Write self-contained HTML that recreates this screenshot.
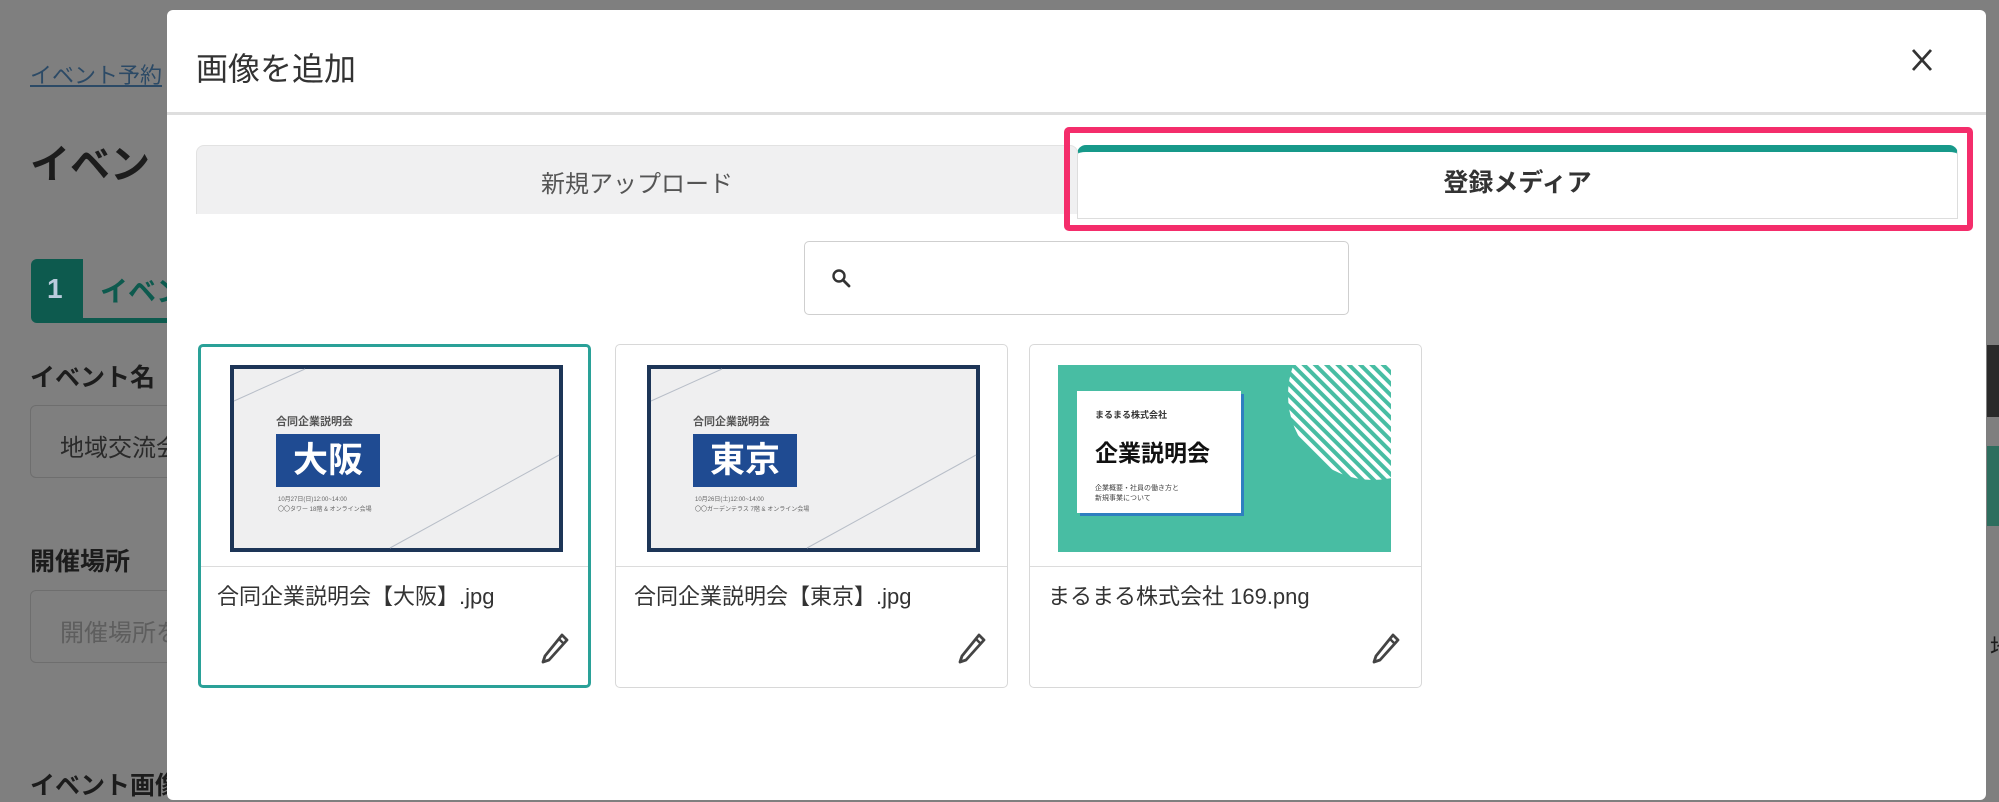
<!DOCTYPE html>
<html><head><meta charset="utf-8"><style>
*{margin:0;padding:0;box-sizing:border-box}
body{width:1999px;height:782px;overflow:hidden;background:#7f7f7f;position:relative;font-family:"Liberation Sans","Noto Sans CJK JP",sans-serif}
.a{position:absolute;white-space:nowrap}
.card{position:absolute;top:344px;width:393px;height:344px;background:#fff;border:1px solid #d8d8d8;border-radius:5px}
.card.sel{border:3px solid #2aa198}
.thumb{position:absolute;left:31px;top:20px;width:333px;height:187px;overflow:hidden}
.div{position:absolute;left:0;right:0;top:221px;height:1px;background:#dcdcdc}
.name{position:absolute;left:18px;top:234px;font-size:22px;color:#333}
.pen{position:absolute;right:20px;top:287px}
</style></head><body>
<div class="a" style="left:30px;top:58px;font-size:22px;color:#2c4a66;text-decoration:underline">イベント予約</div>
<div class="a" style="left:30px;top:132px;font-size:40px;font-weight:bold;color:#1c1c1c">イベン</div>
<div class="a" style="left:31px;top:259px;width:52px;height:64px;background:#0d5a4e;border-radius:6px 0 0 6px;color:#bcd;font-size:28px;font-weight:bold;padding:14px 0 0 16px">1</div>
<div class="a" style="left:83px;top:318px;width:90px;height:5px;background:#0d5a4e"></div>
<div class="a" style="left:100px;top:270px;font-size:28px;font-weight:bold;color:#0d5a4e">イベン</div>
<div class="a" style="left:30px;top:358px;font-size:25px;font-weight:bold;color:#1c1c1c">イベント名</div>
<div class="a" style="left:30px;top:405px;width:200px;height:73px;border:1px solid #6e6e6e;border-radius:6px"></div>
<div class="a" style="left:60px;top:428px;font-size:24px;color:#2a2a2a">地域交流会</div>
<div class="a" style="left:30px;top:542px;font-size:25px;font-weight:bold;color:#1c1c1c">開催場所</div>
<div class="a" style="left:30px;top:590px;width:200px;height:73px;border:1px solid #6e6e6e;border-radius:6px"></div>
<div class="a" style="left:60px;top:613px;font-size:24px;color:#5e5e5e">開催場所を</div>
<div class="a" style="left:30px;top:766px;font-size:25px;font-weight:bold;color:#1c1c1c">イベント画像</div>
<div class="a" style="left:1987px;top:345px;width:12px;height:72px;background:#2a2a2a"></div>
<div class="a" style="left:1987px;top:446px;width:12px;height:80px;background:#2e6e5e"></div>
<div class="a" style="left:1990px;top:630px;font-size:22px;color:#1c1c1c">地</div>
<div class="a" style="left:167px;top:10px;width:1819px;height:790px;background:#fff;border-radius:6px">
  <div class="a" style="left:29px;top:34px;font-size:32px;color:#333">画像を追加</div>
  <svg class="a" style="left:1744px;top:38px" width="22" height="24" viewBox="0 0 22 24"><path d="M2 2L20 22M20 2L2 22" stroke="#333" stroke-width="2.8"/></svg>
  <div class="a" style="left:0;right:0;top:102px;height:3px;background:#dedede"></div>
  <div class="a" style="left:29px;top:135px;width:882px;height:69px;background:#f0f0f1;border:1px solid #e2e2e2;border-bottom:none;border-radius:8px 8px 0 0"></div>
  <div class="a" style="left:29px;top:154px;width:882px;text-align:center;font-size:24px;color:#555">新規アップロード</div>
  <div class="a" style="left:897px;top:117px;width:909px;height:104px;border:6px solid #f42d6b;border-radius:5px"></div>
  <div class="a" style="left:910px;top:135px;width:881px;height:74px;background:#fff;border:1px solid #ddd;border-top:7px solid #17998a;border-radius:9px 9px 0 0"></div>
  <div class="a" style="left:910px;top:153px;width:881px;text-align:center;font-size:25px;font-weight:bold;color:#333">登録メディア</div>
  <div class="a" style="left:637px;top:231px;width:545px;height:74px;border:1px solid #cfcfcf;border-radius:5px"></div>
  <svg class="a" style="left:664px;top:258px" width="22" height="22" viewBox="0 0 22 22"><circle cx="8" cy="8" r="5.5" fill="none" stroke="#333" stroke-width="2.4"/><path d="M12 12L18 18" stroke="#333" stroke-width="2.8" stroke-linecap="round"/></svg>
</div>
<div class="card sel" style="left:198px">
  <div class="thumb" style="left:29px;top:18px">
    <svg width="333" height="187" viewBox="0 0 333 187"><rect width="333" height="187" fill="#1d3557"/><rect x="4" y="4" width="325" height="179" fill="#efeff0"/><path d="M4 36L75 4M160 183L329 90" stroke="#b8bec8" stroke-width="1"/></svg>
    <div class="a" style="left:46px;top:48px;font-size:11px;font-weight:bold;color:#555">合同企業説明会</div>
    <div class="a" style="left:46px;top:69px;width:104px;height:53px;background:#1f4b92;color:#fff;font-size:35px;font-weight:bold;text-align:center;line-height:53px">大阪</div>
    <div class="a" style="left:48px;top:130px;font-size:6px;color:#666;line-height:10px">10月27日(日)12:00~14:00<br>〇〇タワー 18階 &amp; オンライン会場</div>
  </div>
  <div class="div" style="top:219px"></div>
  <div class="name" style="left:16px;top:232px">合同企業説明会【大阪】.jpg</div>
  <svg class="pen" style="right:18px;top:285px" width="30" height="32" viewBox="0 0 30 32"><path d="M22 3L27 8L9 28L3 30L5 24Z" fill="none" stroke="#444" stroke-width="2.8" stroke-linejoin="round"/><path d="M19 7L24 12" stroke="#444" stroke-width="2.4"/></svg>
</div>
<div class="card" style="left:615px">
  <div class="thumb">
    <svg width="333" height="187" viewBox="0 0 333 187"><rect width="333" height="187" fill="#1d3557"/><rect x="4" y="4" width="325" height="179" fill="#efeff0"/><path d="M4 36L75 4M160 183L329 90" stroke="#b8bec8" stroke-width="1"/></svg>
    <div class="a" style="left:46px;top:48px;font-size:11px;font-weight:bold;color:#555">合同企業説明会</div>
    <div class="a" style="left:46px;top:69px;width:104px;height:53px;background:#1f4b92;color:#fff;font-size:35px;font-weight:bold;text-align:center;line-height:53px">東京</div>
    <div class="a" style="left:48px;top:130px;font-size:6px;color:#666;line-height:10px">10月26日(土)12:00~14:00<br>〇〇ガーデンテラス 7階 &amp; オンライン会場</div>
  </div>
  <div class="div"></div>
  <div class="name">合同企業説明会【東京】.jpg</div>
  <svg class="pen" width="30" height="32" viewBox="0 0 30 32"><path d="M22 3L27 8L9 28L3 30L5 24Z" fill="none" stroke="#444" stroke-width="2.8" stroke-linejoin="round"/><path d="M19 7L24 12" stroke="#444" stroke-width="2.4"/></svg>
</div>
<div class="card" style="left:1029px">
  <div class="thumb" style="left:28px">
    <svg width="335" height="187" viewBox="0 0 335 187"><defs><pattern id="st" width="8" height="8" patternUnits="userSpaceOnUse" patternTransform="rotate(-45)"><rect width="8" height="8" fill="#48bda3"/><rect width="4" height="8" fill="#fff"/></pattern><clipPath id="cl"><rect width="335" height="187"/></clipPath></defs><rect width="335" height="187" fill="#48bda3"/><circle cx="315" cy="30" r="85" fill="url(#st)" clip-path="url(#cl)"/><rect x="22" y="29" width="164" height="122" fill="#2f7fc0"/><rect x="19" y="26" width="164" height="122" fill="#fff"/></svg>
    <div class="a" style="left:37px;top:43px;font-size:9px;font-weight:bold;color:#333">まるまる株式会社</div>
    <div class="a" style="left:37px;top:69px;font-size:23px;font-weight:bold;color:#111">企業説明会</div>
    <div class="a" style="left:37px;top:119px;font-size:7px;color:#444;line-height:10px">企業概要・社員の働き方と<br>新規事業について</div>
  </div>
  <div class="div"></div>
  <div class="name">まるまる株式会社 169.png</div>
  <svg class="pen" width="30" height="32" viewBox="0 0 30 32"><path d="M22 3L27 8L9 28L3 30L5 24Z" fill="none" stroke="#444" stroke-width="2.8" stroke-linejoin="round"/><path d="M19 7L24 12" stroke="#444" stroke-width="2.4"/></svg>
</div>
</body></html>
